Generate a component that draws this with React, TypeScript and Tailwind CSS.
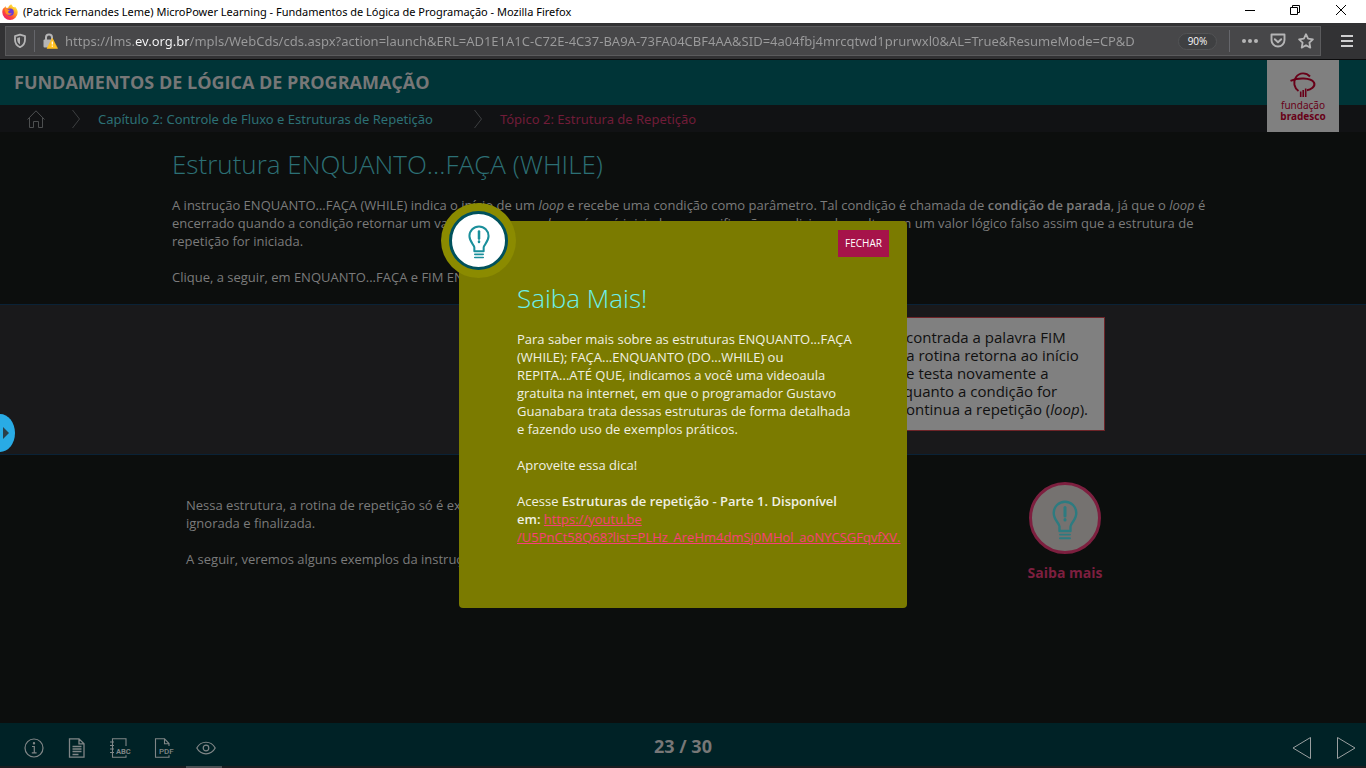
import React from "react";

const URL_TEXT =
  "https://lms.ev.org.br/mpls/WebCds/cds.aspx?action=launch&ERL=AD1E1A1C-C72E-4C37-BA9A-73FA04CBF4AA&SID=4a04fbj4mrcqtwd1prurwxl0&AL=True&ResumeMode=CP&D";

function FirefoxLogo() {
  return (
    <svg className="size-4 shrink-0" viewBox="0 0 16 16" aria-hidden="true">
      <defs>
        <linearGradient id="ff-flame" x1="0.85" y1="0.1" x2="0.2" y2="0.95">
          <stop offset="0" stopColor="#fff04a" />
          <stop offset="0.35" stopColor="#ffa51f" />
          <stop offset="0.7" stopColor="#ff4538" />
          <stop offset="1" stopColor="#e8216f" />
        </linearGradient>
      </defs>
      <path
        d="M9.2 0.2c1 .9 1.5 1.9 1.8 2.8 1-.2 1.600.4 1.600.4.3-.4.200-1 .2-1 1.700 1.400 2.900 3.700 2.900 5.900A7.700 7.700 0 0 1 .3 8.300c0-1.800.4-3.300 1.300-4.500l.1 1C2.400 3.400 3.100 2.700 3.800 2.300c-.2.600-.1 1.100.1 1.500.8-.2 1.500-.1 2.200.2C6.600 2.300 7.600.9 9.200.2z"
        fill="url(#ff-flame)"
      />
      <circle cx="8.200" cy="8.200" r="3.600" fill="#6a3bd8" />
      <path d="M2.800 5.200c1.200-.6 2.500-.2 3.200.6h2c-.2 1-1.500 1.200-1.900 2 0 1.500 2 2.200 3.600 1.200-.5 2.300-5.300 2.600-6.200-.6-.2-1-.3-2.100-.7-3.200z" fill="#ff9322" />
    </svg>
  );
}

function Shield() {
  return (
    <svg className="size-4" viewBox="0 0 16 16" fill="none" aria-hidden="true">
      <path d="M8 1.700 13 3.200v3.600c0 3.400-2 6-5 7.400-3-1.400-5-4-5-7.400V3.200z" stroke="#b5b5b6" strokeWidth="1.800" strokeLinejoin="round" />
      <path d="M8 4.200v7.400c-1.700-1-2.800-2.700-2.800-5V4.900z" fill="#b5b5b6" />
    </svg>
  );
}

function LockWarning() {
  return (
    <svg className="size-4" viewBox="0 0 16 16" fill="none" aria-hidden="true">
      <path d="M4 7V4.500a3 3 0 0 1 6 0V7" stroke="#b5b5b6" strokeWidth="2" />
      <rect x="1.500" y="6.500" width="10" height="8" rx="1" fill="#b5b5b6" />
      <path d="M10.300 5.200 15.600 15.400H5z" fill="#ffbf1f" stroke="#ffbf1f" strokeWidth="0.600" strokeLinejoin="round" />
      <path d="M10.300 8.500v3M10.300 12.500v1.200" stroke="#fff" strokeWidth="1.200" />
    </svg>
  );
}

function Bulb({ className }: { className: string }) {
  return (
    <svg className={className} viewBox="0 0 26 40" fill="none" stroke="currentColor" aria-hidden="true">
      <path d="M7.500 31v-4.500c0-3-5.800-6.500-5.800-13.500a11.300 11.300 0 0 1 22.600 0c0 7-5.800 10.500-5.800 13.500V31z" strokeWidth="2.400" strokeLinejoin="round" />
      <path d="M13 7.500v8.500" strokeWidth="3" strokeLinecap="round" />
      <path d="M13 19.500v.5" strokeWidth="3" strokeLinecap="round" />
      <path d="M8 34.600h10M8 38.300h10" strokeWidth="1.900" strokeLinecap="round" />
    </svg>
  );
}

function Chevron() {
  return (
    <svg className="h-5 w-2.5 shrink-0" viewBox="0 0 10 20" fill="none" stroke="#3d3f41" aria-hidden="true">
      <path d="M1.500 1 8.500 10 1.500 19" />
    </svg>
  );
}

function BrowserChrome() {
  return (
    <>
      <div className="flex h-[23px] items-center justify-between bg-white pl-0.5 text-black">
        <div className="flex items-center gap-[5px]">
          <FirefoxLogo />
          <span className="whitespace-nowrap pt-0.5 font-['Noto_Sans',sans-serif] text-[11px]">
            (Patrick Fernandes Leme) MicroPower Learning - Fundamentos de Lógica de Programação - Mozilla Firefox
          </span>
        </div>
        <div className="flex h-full items-start">
          <button aria-label="Minimizar" className="flex h-5 w-[45px] items-center justify-center">
            <svg className="size-2.5" viewBox="0 0 10 10" stroke="#000"><path d="M0 5.500h10" /></svg>
          </button>
          <button aria-label="Restaurar" className="flex h-5 w-[46px] items-center justify-center">
            <svg className="size-2.5" viewBox="0 0 10 10" fill="none" stroke="#000"><path d="M.5 2.500h7v7h-7zM2.500 2.500v-2h7v7h-2" /></svg>
          </button>
          <button aria-label="Fechar janela" className="flex h-5 w-12 items-center justify-center pr-0.5">
            <svg className="size-2.5" viewBox="0 0 10 10" stroke="#000"><path d="M0 0l10 10M10 0 0 10" /></svg>
          </button>
        </div>
      </div>
      <div className="flex h-[37px] items-center border-b border-[#0c0c0d] bg-[#323234] pr-[13px] pl-[5px]">
        <div className="flex h-[30px] min-w-0 flex-1 items-center border border-[#5b5b5d] bg-[#474749] pr-1.5 pl-[5px]">
          <button aria-label="Proteção contra rastreamento" className="flex w-[18px] shrink-0 justify-center"><Shield /></button>
          <span className="mr-1 ml-[5px] h-[22px] w-px shrink-0 bg-[#65666b]" />
          <button aria-label="Informações da conexão" className="mr-1 flex w-[22px] shrink-0 justify-center"><LockWarning /></button>
          <input
            aria-label="Endereço"
            readOnly
            value={URL_TEXT}
            className="min-w-0 flex-1 bg-[linear-gradient(90deg,#9b9b9c_70px,#f9f9fa_70px,#f9f9fa_124px,#9b9b9c_124px)] bg-clip-text pt-0.5 font-['Noto_Sans',sans-serif] text-[13px] text-transparent outline-none"
          />
          <button className="mr-3 ml-1 h-[17px] w-[39px] shrink-0 rounded-full border border-[#525355] bg-[#3f4042] text-[10px] leading-[15px] font-medium text-[#f9f9fa]">90%</button>
          <span className="h-[22px] w-px shrink-0 bg-[#65666b]" />
          <button aria-label="Ações da página" className="ml-3 shrink-0">
            <svg className="size-4" viewBox="0 0 16 16" fill="#b5b5b6"><circle cx="2" cy="8" r="2" /><circle cx="8" cy="8" r="2" /><circle cx="14" cy="8" r="2" /></svg>
          </button>
          <button aria-label="Salvar no Pocket" className="ml-3 shrink-0">
            <svg className="size-4" viewBox="0 0 16 16" fill="none" stroke="#b5b5b6" strokeWidth="1.900" strokeLinecap="round" strokeLinejoin="round">
              <path d="M1.500 1.500h13V7a6.500 6.500 0 0 1-13 0z" /><path d="M4.800 6.200 8 9.300l3.200-3.100" />
            </svg>
          </button>
          <button aria-label="Adicionar aos favoritos" className="ml-3 shrink-0">
            <svg className="size-4" viewBox="0 0 16 16" fill="none" stroke="#b5b5b6" strokeWidth="1.800" strokeLinejoin="round">
              <path d="m8 1.200 2.100 4.500 4.800.6-3.500 3.400.9 4.900L8 12.200l-4.300 2.400.9-4.900L1.100 6.300l4.800-.6z" />
            </svg>
          </button>
        </div>
        <button aria-label="Menu" className="ml-5 shrink-0">
          <svg className="h-3.5 w-3" viewBox="0 0 12 14" stroke="#cfcfd0" strokeWidth="2"><path d="M0 2h12M0 7h12M0 12h12" /></svg>
        </button>
      </div>
    </>
  );
}

function BradescoLogo() {
  return (
    <div className="absolute top-0 right-[27px] flex size-[72px] flex-col items-center bg-[#808080] pt-3 text-[#680018]">
      <svg className="h-[26px] w-7" viewBox="0 0 28 26" fill="none" stroke="currentColor" aria-hidden="true">
        <path d="M21 4.500C17.500.6 10.500-.2 6.800 5.500 4 10 5 15.800 9.500 19" strokeWidth="1.900" />
        <path d="M1.500 8.800C9 5.700 21.500 5.500 25 10.500c2 4.300-3.500 7.300-7 7.700" strokeWidth="2" />
        <path d="M11.700 19.500V25M14.200 18v7M16.700 16.500V25" strokeWidth="1.600" />
      </svg>
      <span className="mt-0.5 font-['Noto_Sans',sans-serif] text-[10px] leading-[11px]">fundação</span>
      <span className="font-['Noto_Sans',sans-serif] text-[10px] leading-[10px] font-bold">bradesco</span>
    </div>
  );
}

function CourseHeader() {
  return (
    <header className="relative">
      <div className="flex h-[45px] items-center bg-[#003437] pl-3.5">
        <h1 className="text-[18px] font-bold text-[#777]">FUNDAMENTOS DE LÓGICA DE PROGRAMAÇÃO</h1>
      </div>
      <nav className="flex h-[27px] items-center bg-[#111214] pl-[27px] font-['Noto_Sans',sans-serif] text-[13px]">
        <a href="#inicio" aria-label="Início" className="shrink-0">
          <svg className="size-[18px]" viewBox="0 0 18 18" fill="none" stroke="#4d4f50" aria-hidden="true">
            <path d="M.5 9.500 9 .8l8.500 8.700M2.500 8v9.500h4v-6h5v6h4V8" />
          </svg>
        </a>
        <span className="ml-[26px] flex"><Chevron /></span>
        <a href="#capitulo-2" className="ml-[17px] pt-0.5 text-[#2c7075]">Capítulo 2: Controle de Fluxo e Estruturas de Repetição</a>
        <span className="ml-10 flex"><Chevron /></span>
        <a href="#topico-2" className="ml-[17px] pt-0.5 text-[#701c38]">Tópico 2: Estrutura de Repetição</a>
      </nav>
      <BradescoLogo />
    </header>
  );
}

function Lesson() {
  return (
    <main className="flex-1">
      <div className="mx-auto h-[172px] w-full max-w-[1022px]">
        <h2 className="pt-3 text-[26px] leading-10 font-light text-[#2c7075]">Estrutura ENQUANTO...FAÇA (WHILE)</h2>
        <p className="mt-3 text-[13px] leading-[18px] whitespace-nowrap">
          A instrução ENQUANTO...FAÇA (WHILE) indica o início de um <i>loop</i> e recebe uma condição como parâmetro. Tal condição é chamada de <b className="font-semibold">condição de parada</b>, já que o <i>loop</i> é<br />
          encerrado quando a condição retornar um valor falso, logo, o <i>loop</i> só será iniciado se a verificação condicional resultar em um valor lógico falso assim que a estrutura de<br />
          repetição for iniciada.
        </p>
        <p className="mt-[18px] text-[13px] leading-[18px]">Clique, a seguir, em ENQUANTO...FAÇA e FIM ENQUANTO para conhecer cada parte.</p>
      </div>
      <section className="border-y border-[#0a2236] bg-[#19191b] pt-3 pb-[23px]">
        <div className="mx-auto flex max-w-[844px] justify-end">
          <div className="flex h-[114px] w-[320px] items-center justify-end border border-[#6e2428] bg-[#808080] pr-4 pb-0.5 text-[15px] leading-[18px] whitespace-nowrap text-[#101010]">
            <p>
              Quando é encontrada a palavra FIM<br />
              ENQUANTO, a rotina retorna ao início<br />
              da estrutura e testa novamente a<br />
              condição. Enquanto a condição for<br />
              verdadeira, continua a repetição (<i>loop</i>).
            </p>
          </div>
        </div>
      </section>
      <div className="mx-auto flex max-w-[994px] justify-between pt-[27px]">
        <div className="pt-3.5 text-[13px] leading-[18px]">
          <p>
            Nessa estrutura, a rotina de repetição só é executada se a condição for verdadeira; senão, é<br />
            ignorada e finalizada.
          </p>
          <p className="mt-[18px]">A seguir, veremos alguns exemplos da instrução ENQUANTO...FAÇA.</p>
        </div>
        <button className="mr-[66px] flex w-[98px] flex-col items-center">
          <span className="flex size-[72px] items-center justify-center rounded-full border-[3px] border-[#7d1f3f] bg-[#757270] pt-1 text-[#2d7b80]">
            <Bulb className="h-10 w-[26px]" />
          </span>
          <span className="mt-2 text-[14px] leading-[22px] font-bold text-[#7d1f3f]">Saiba mais</span>
        </button>
      </div>
    </main>
  );
}

function CourseFooter() {
  return (
    <footer className="bg-[#002226]">
      <div className="grid h-[43px] grid-cols-3 items-center">
        <div className="flex items-center gap-[23px] pt-1.5 pl-6">
          <button aria-label="Informações">
            <svg className="size-5" viewBox="0 0 20 20" fill="none" stroke="#808687" strokeWidth="1.200"><circle cx="10" cy="10" r="9" /><path d="M8 8.500h2.300v6M7.800 14.800h4.800" /><circle cx="10" cy="5.300" r=".6" fill="#808687" /></svg>
          </button>
          <button aria-label="Texto">
            <svg className="size-5" viewBox="0 0 20 20" fill="none" stroke="#808687" strokeWidth="1.300"><path d="M2.500 .8h9.500l5 5v13.400H2.500zM12 .8v5h5M5.500 8.500h9M5.500 11h9M5.500 13.500h9M5.500 16.500h6" /></svg>
          </button>
          <button aria-label="Glossário">
            <svg className="size-5 overflow-visible" viewBox="0 0 20 20" fill="none" stroke="#808687" strokeWidth="1.100">
              <path d="M16 8V.8H2.500v18.400H16v-2M0 4h4M0 7.500h4M0 11h4M0 14.500h4" />
              <text x="6" y="15.500" fontSize="7.500" fontWeight="700" fontFamily="Roboto, sans-serif" fill="#808687" stroke="none">ABC</text>
            </svg>
          </button>
          <button aria-label="PDF">
            <svg className="size-5 overflow-visible" viewBox="0 0 20 20" fill="none" stroke="#808687" strokeWidth="1.100">
              <path d="M16 8V5.500L11.500.8H2.500v18.400H16v-2M11.500.8v5H16" />
              <text x="6" y="15.500" fontSize="8" fontWeight="500" fontFamily="Roboto, sans-serif" fill="#808687" stroke="none">PDF</text>
            </svg>
          </button>
          <button aria-label="Visualizar">
            <svg className="size-5" viewBox="0 0 20 20" fill="none" stroke="#808687" strokeWidth="1.200"><path d="M.8 10C5 2.300 15 2.300 19.200 10 15 17.700 5 17.700.8 10z" /><circle cx="10" cy="10" r="2.800" /></svg>
          </button>
        </div>
        <p className="pt-1 text-center text-[18px] font-bold text-[#777]">23 / 30</p>
        <div className="flex justify-end gap-6 pt-1.5 pr-2.5">
          <button aria-label="Anterior">
            <svg className="h-6 w-5" viewBox="0 0 20 24" fill="none" stroke="#9a9fa0" strokeLinejoin="round"><path d="M18.500 1.500v21L1 12z" /></svg>
          </button>
          <button aria-label="Próximo">
            <svg className="h-6 w-5" viewBox="0 0 20 24" fill="none" stroke="#9a9fa0" strokeLinejoin="round"><path d="M1.500 1.500v21L19 12z" /></svg>
          </button>
        </div>
      </div>
      <div className="h-0.5 bg-[#1a1d20] pl-[186px]">
        <div className="h-full w-9 bg-[#4b4f52]" />
      </div>
    </footer>
  );
}

function SaibaMaisDialog() {
  return (
    <div className="absolute inset-0 flex items-center justify-center">
      <div role="dialog" aria-labelledby="saiba-mais" className="relative w-[448px] rounded-sm bg-[#7b7b00] pt-[9px] pb-[62px] text-[#f0f0e4]">
        <span className="absolute -top-[18px] -left-[18px] flex size-[75px] items-center justify-center rounded-full bg-[#8b8b00]">
          <span className="flex size-[59px] items-center justify-center rounded-full border-[3px] border-[#00515c] bg-white pt-1 text-[#1a8f9b]">
            <Bulb className="h-[34px] w-[22px]" />
          </span>
        </span>
        <div className="flex justify-end pr-[18px]">
          <button className="h-[27px] w-[51px] bg-[#a6134a] text-[10px] text-white">FECHAR</button>
        </div>
        <div className="pl-[58px] text-[13px] leading-[18px] whitespace-nowrap">
          <h2 id="saiba-mais" className="mt-[21px] text-[26px] leading-10 font-light text-[#6df0ea]">Saiba Mais!</h2>
          <p className="mt-3">
            Para saber mais sobre as estruturas ENQUANTO...FAÇA<br />
            (WHILE); FAÇA...ENQUANTO (DO...WHILE) ou<br />
            REPITA...ATÉ QUE, indicamos a você uma videoaula<br />
            gratuita na internet, em que o programador Gustavo<br />
            Guanabara trata dessas estruturas de forma detalhada<br />
            e fazendo uso de exemplos práticos.
          </p>
          <p className="mt-[18px]">Aproveite essa dica!</p>
          <p className="mt-[18px]">
            Acesse <b className="font-semibold">Estruturas de repetição - Parte 1. Disponível<br />em:</b>{" "}
            <a href="https://youtu.be/U5PnCt58Q68?list=PLHz_AreHm4dmSj0MHol_aoNYCSGFqvfXV" className="text-[#f8407a] underline">
              https://youtu.be<br />/U5PnCt58Q68?list=PLHz_AreHm4dmSj0MHol_aoNYCSGFqvfXV.
            </a>
          </p>
        </div>
      </div>
    </div>
  );
}

export default function App() {
  return (
    <div className="flex min-h-screen flex-col bg-[#0c0e0d] font-['Open_Sans',sans-serif] text-[#7b7b7b]">
      <BrowserChrome />
      <div className="relative flex flex-1 flex-col">
        <CourseHeader />
        <Lesson />
        <CourseFooter />
        <SaibaMaisDialog />
        <button aria-label="Abrir painel lateral" className="absolute top-[354px] left-0 flex h-[38px] w-[15px] items-center rounded-[0_100%_100%_0/0_50%_50%_0] bg-[#29abe5] pl-[3px]">
          <svg className="h-3 w-1.5" viewBox="0 0 6 12" fill="#2b3f4a"><path d="M0 0l6 6-6 6z" /></svg>
        </button>
      </div>
    </div>
  );
}
